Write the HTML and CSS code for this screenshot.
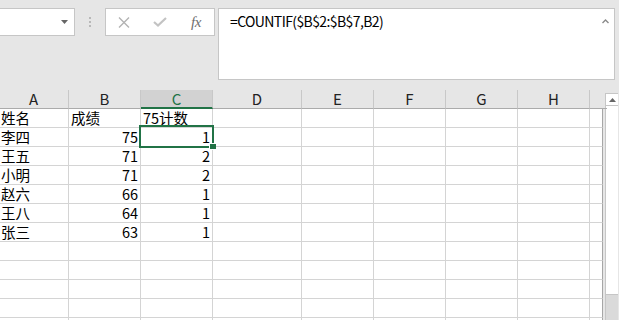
FILE: index.html
```
<!DOCTYPE html>
<html lang="zh-CN">
<head>
<meta charset="utf-8">
<title>Excel COUNTIF</title>
<link rel="stylesheet" href="styles.css">
</head>
<body>
<div class="app">
  <div class="toolbar">
    <div class="namebox"><svg class="dd" width="7" height="4" viewBox="0 0 7 4"><path d="M0 0H7L3.5 4Z" fill="#666"/></svg></div>
    <div class="grip"><i></i><i></i><i></i></div>
    <div class="fbtns">
      <span class="slot"><svg width="12" height="11" viewBox="0 0 12 11"><path d="M1 0.5L11 10.5M11 0.5L1 10.5" stroke="#b3b3b3" stroke-width="1.4" fill="none"/></svg></span>
      <span class="slot"><svg width="14" height="10" viewBox="0 0 14 10"><path d="M1 5L5 8.5L13 1" stroke="#c3c3c3" stroke-width="2.2" fill="none"/></svg></span>
      <span class="slot"><span class="fx">fx</span></span>
    </div>
    <div class="formula">
      <span class="ftext">=COUNTIF($B$2:$B$7,B2)</span>
      <svg class="caret" width="7" height="5" viewBox="0 0 7 5"><path d="M0.5 4L3.5 1L6.5 4" stroke="#8a8a8a" stroke-width="1.4" fill="none"/></svg>
    </div>
  </div>
  <div class="sheet">
    <div class="gridwrap">
      <div class="colheads">
        <div class="ch">A</div><div class="ch">B</div><div class="ch sel">C</div><div class="ch">D</div><div class="ch">E</div><div class="ch">F</div><div class="ch">G</div><div class="ch">H</div><div class="ch last"></div>
      </div>
      <div class="cells">
        <div class="c">姓名</div><div class="c">成绩</div><div class="c">75计数</div><div class="c"></div><div class="c"></div><div class="c"></div><div class="c"></div><div class="c"></div><div class="c e"></div>
        <div class="c">李四</div><div class="c n">75</div><div class="c n">1</div><div class="c"></div><div class="c"></div><div class="c"></div><div class="c"></div><div class="c"></div><div class="c e"></div>
        <div class="c">王五</div><div class="c n">71</div><div class="c n">2</div><div class="c"></div><div class="c"></div><div class="c"></div><div class="c"></div><div class="c"></div><div class="c e"></div>
        <div class="c">小明</div><div class="c n">71</div><div class="c n">2</div><div class="c"></div><div class="c"></div><div class="c"></div><div class="c"></div><div class="c"></div><div class="c e"></div>
        <div class="c">赵六</div><div class="c n">66</div><div class="c n">1</div><div class="c"></div><div class="c"></div><div class="c"></div><div class="c"></div><div class="c"></div><div class="c e"></div>
        <div class="c">王八</div><div class="c n">64</div><div class="c n">1</div><div class="c"></div><div class="c"></div><div class="c"></div><div class="c"></div><div class="c"></div><div class="c e"></div>
        <div class="c">张三</div><div class="c n">63</div><div class="c n">1</div><div class="c"></div><div class="c"></div><div class="c"></div><div class="c"></div><div class="c"></div><div class="c e"></div>
        <div class="c"></div><div class="c"></div><div class="c"></div><div class="c"></div><div class="c"></div><div class="c"></div><div class="c"></div><div class="c"></div><div class="c e"></div>
        <div class="c"></div><div class="c"></div><div class="c"></div><div class="c"></div><div class="c"></div><div class="c"></div><div class="c"></div><div class="c"></div><div class="c e"></div>
        <div class="c"></div><div class="c"></div><div class="c"></div><div class="c"></div><div class="c"></div><div class="c"></div><div class="c"></div><div class="c"></div><div class="c e"></div>
        <div class="c"></div><div class="c"></div><div class="c"></div><div class="c"></div><div class="c"></div><div class="c"></div><div class="c"></div><div class="c"></div><div class="c e"></div>
        <div class="c"></div><div class="c"></div><div class="c"></div><div class="c"></div><div class="c"></div><div class="c"></div><div class="c"></div><div class="c"></div><div class="c e"></div>
      </div>
      <div class="selection"><span class="handle"></span></div>
    </div>
    <div class="vscroll">
      <div class="up"><svg width="7" height="4" viewBox="0 0 7 4"><path d="M0 4H7L3.5 0Z" fill="#666"/></svg></div>
      <div class="thumb"></div>
      <div class="track"></div>
    </div>
  </div>
</div>
</body>
</html>
```
FILE: styles.css
```
* { box-sizing: border-box; }
html, body { margin: 0; padding: 0; }
body {
  width: 619px;
  height: 320px;
  overflow: hidden;
  background: #e6e6e6;
  font-family: "Noto Sans CJK SC", "Noto Sans", sans-serif;
  color: #000;
}
.app { width: 619px; height: 320px; overflow: hidden; }

.toolbar {
  display: flex;
  align-items: flex-start;
  height: 80px;
  padding-top: 8px;
}
.namebox {
  margin-left: -10px;
  width: 85px;
  height: 28px;
  background: #fff;
  border: 1px solid #c6c6c6;
  display: flex;
  align-items: center;
  justify-content: flex-end;
  padding-right: 6px;
}
.dd { display: block; margin-top: -1px; }
.grip {
  margin-left: 14px;
  margin-top: 9px;
  width: 2px;
  display: flex;
  flex-direction: column;
  gap: 2px;
}
.grip i { display: block; width: 2px; height: 2px; background: #b8b8b8; }
.fbtns {
  margin-left: 14px;
  width: 110px;
  height: 28px;
  background: #fff;
  border: 1px solid #c6c6c6;
  display: flex;
  align-items: center;
}
.slot {
  width: 36px;
  height: 26px;
  display: flex;
  align-items: center;
  justify-content: center;
}
.slot svg { display: block; }
.fx {
  font-family: "Liberation Serif", serif;
  font-style: italic;
  font-size: 15px;
  color: #6e6e6e;
  letter-spacing: -0.5px;
  line-height: 1;
}
.formula {
  margin-left: 3px;
  width: 397px;
  height: 72px;
  background: #fff;
  border: 1px solid #c6c6c6;
  display: flex;
  align-items: flex-start;
  justify-content: space-between;
  padding: 2px 5px 0 11px;
}
.ftext {
  font-size: 14px;
  line-height: 20px;
  letter-spacing: -0.6px;
  color: #000;
}
.caret { display: block; margin-top: 8px; }

.sheet {
  display: flex;
  align-items: flex-start;
  padding-top: 10px;
}
.gridwrap {
  position: relative;
  width: 606px;
  margin-left: -1px;
}
.colheads {
  display: grid;
  grid-template-columns: 70px 72px 72px 89px 72px 72px 72px 72px 17px;
  height: 19px;
}
.ch {
  height: 19px;
  border-right: 1px solid #c8c8c8;
  border-bottom: 1px solid #ababab;
  font-size: 15px;
  line-height: 18px;
  text-align: center;
  color: #222;
}
.ch.sel {
  background: #d2d2d2;
  border-bottom: 2px solid #217346;
  color: #217346;
}
.ch.last { border-right: none; }
.cells {
  display: grid;
  grid-template-columns: 70px 72px 72px 89px 72px 72px 72px 72px 13px;
  grid-auto-rows: 19px;
  width: 604px;
  background: #fff;
}
.c {
  border-right: 1px solid #d4d4d4;
  border-bottom: 1px solid #d4d4d4;
  font-size: 14.5px;
  line-height: 18px;
  padding: 0 2px;
  white-space: nowrap;
}
.c.n { text-align: right; padding-right: 2px; }
.c.e { border-right: 1px solid #a6a6a6; }

.selection {
  position: absolute;
  left: 140px;
  top: 35px;
  width: 75px;
  height: 23px;
  border: 2px solid #217346;
}
.handle {
  position: absolute;
  right: -4px;
  bottom: -4px;
  width: 7px;
  height: 7px;
  background: #217346;
  border: 1px solid #fff;
  border-right: none;
}

.vscroll {
  margin-top: 3px;
  width: 13px;
  height: 230px;
  display: flex;
  flex-direction: column;
}
.up {
  height: 13px;
  background: #fff;
  border: 1px solid #c6c6c6;
  border-right: none;
  display: flex;
  align-items: center;
  justify-content: center;
}
.up svg { display: block; }
.thumb {
  height: 189px;
  background: #fff;
  border-left: 1px solid #c6c6c6;
  border-bottom: 1px solid #c6c6c6;
}
.track { flex: 1; background: #dadada; border-left: 1px solid #c6c6c6; }
```
